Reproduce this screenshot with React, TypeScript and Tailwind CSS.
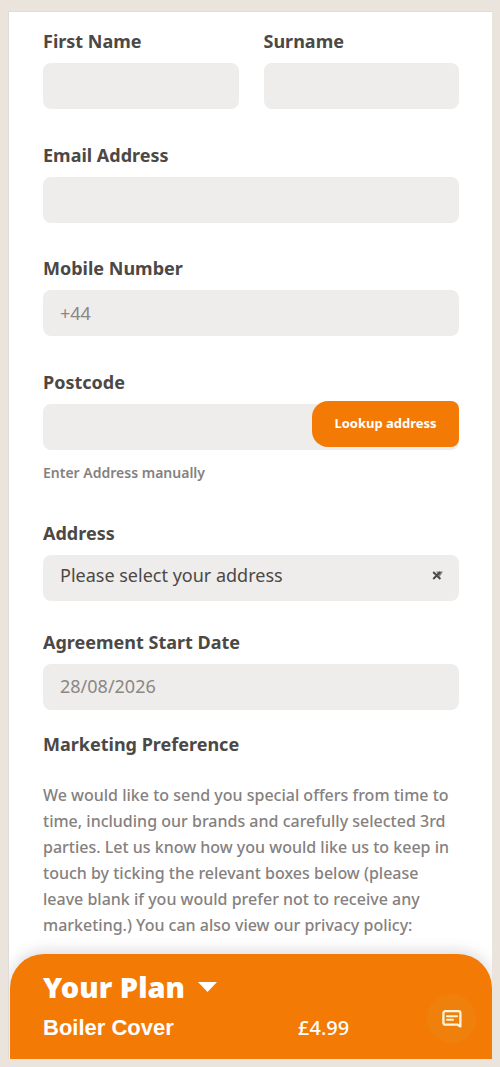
import type { ReactNode } from "react";

const inputStyle =
  "block w-full h-[46px] rounded-lg bg-[#eeedeb] px-[17px] text-lg text-[#4b4846] placeholder-[#8b8784] outline-none";

type FieldProps = {
  id: string;
  label: string;
  className?: string;
  children: ReactNode;
};

function Field({ id, label, className = "", children }: FieldProps) {
  return (
    <div className={className}>
      <label htmlFor={id} className="block mb-2.5 text-lg leading-6 font-bold">
        {label}
      </label>
      {children}
    </div>
  );
}

function ChatIcon() {
  return (
    <svg width="20" height="18" viewBox="0 0 20 18" fill="none" stroke="currentColor" aria-hidden="true">
      <path
        d="M3.4 1.2h13a2 2 0 0 1 2 2v13.2l-2.8-1.7H3.4a2 2 0 0 1-2-2V3.2a2 2 0 0 1 2-2Z"
        strokeWidth="2.3"
        strokeLinejoin="round"
      />
      <path d="M5 6.2h10M5 9.8h6" strokeWidth="2.1" strokeLinecap="round" />
    </svg>
  );
}

function PlanBar() {
  return (
    <footer className="relative mt-4 ml-px h-[105px] rounded-t-[34px] bg-[#f37b05] px-[33px] pt-[17px] text-white shadow-[0_-3px_14px_rgba(80,70,90,0.2)]">
      <button type="button" className="flex items-center gap-[13px] text-[29px] leading-8 font-black">
        Your Plan
        <svg width="19" height="10" viewBox="0 0 19 10" fill="currentColor" aria-hidden="true">
          <path d="M0 0h19L9.5 10Z" />
        </svg>
      </button>
      <div className="mt-[11px] grid grid-cols-[255px_1fr] items-center leading-6">
        <span className="font-['Liberation_Sans',sans-serif] text-[22px] font-bold">Boiler Cover</span>
        <span className="text-xl font-medium">£4.99</span>
      </div>
      <button
        type="button"
        aria-label="Open chat"
        className="absolute right-4 bottom-4 flex size-[49px] items-center justify-center rounded-full bg-[#ef800c] text-[#fff5dc]"
      >
        <ChatIcon />
      </button>
    </footer>
  );
}

export default function App() {
  return (
    <div className="min-h-screen bg-[#eae4dd] pt-[11px] pr-2 pb-2 pl-2 font-['Noto_Sans',sans-serif] text-[#4b4846]">
      <main className="overflow-hidden border-t border-l border-[#dedbd8] bg-white">
        <form className="pt-[17px] pr-[33px] pl-[34px]">
          {/* Personal details */}
          <div className="grid grid-cols-2 gap-[25px]">
            <Field id="firstName" label="First Name">
              <input id="firstName" type="text" className={inputStyle} />
            </Field>
            <Field id="surname" label="Surname">
              <input id="surname" type="text" className={inputStyle} />
            </Field>
          </div>
          <Field id="email" label="Email Address" className="mt-[34px]">
            <input id="email" type="email" className={inputStyle} />
          </Field>
          <Field id="mobile" label="Mobile Number" className="mt-[33px]">
            <input id="mobile" type="tel" placeholder="+44" className={inputStyle} />
          </Field>

          {/* Address lookup */}
          <Field id="postcode" label="Postcode" className="mt-[34px]">
            <div className="relative">
              <input id="postcode" type="text" className={inputStyle} />
              <button
                type="button"
                className="absolute right-0 bottom-[3px] h-[46px] w-[147px] rounded-l-2xl rounded-r-lg bg-[#f37b05] text-[13px] font-bold text-white"
              >
                Lookup address
              </button>
            </div>
          </Field>
          <a href="#address" className="mt-[13px] block text-sm leading-5 font-semibold text-[#85817f]">
            Enter Address manually
          </a>
          <Field id="address" label="Address" className="mt-[38px]">
            <div className="relative">
              <select id="address" className={`${inputStyle} appearance-none pb-1.5`}>
                <option>Please select your address</option>
              </select>
              <svg
                className="pointer-events-none absolute top-4 right-4"
                width="11"
                height="9"
                viewBox="0 0 11 9"
                aria-hidden="true"
              >
                <path d="M4 .5h7L7.5 6Z" fill="#8b8784" />
                <path d="m1.2 1 7.2 7M8.4 1 1.2 8" stroke="#4b4846" strokeWidth="2" />
              </svg>
            </div>
          </Field>
          <Field id="startDate" label="Agreement Start Date" className="mt-[29px]">
            <input id="startDate" type="text" placeholder="28/08/2026" className={`${inputStyle} pb-0.5`} />
          </Field>

          {/* Marketing */}
          <h2 className="mt-[22px] text-lg leading-6 font-bold">Marketing Preference</h2>
          <p className="mt-[26px] text-base leading-[26px] font-medium text-[#85817f]">
            We would like to send you special offers from time to time, including our brands and
            carefully selected 3rd parties. Let us know how you would like us to keep in touch by
            ticking the relevant boxes below (please leave blank if you would prefer not to receive
            any marketing.) You can also view our privacy policy:
          </p>
        </form>
        <PlanBar />
      </main>
    </div>
  );
}
